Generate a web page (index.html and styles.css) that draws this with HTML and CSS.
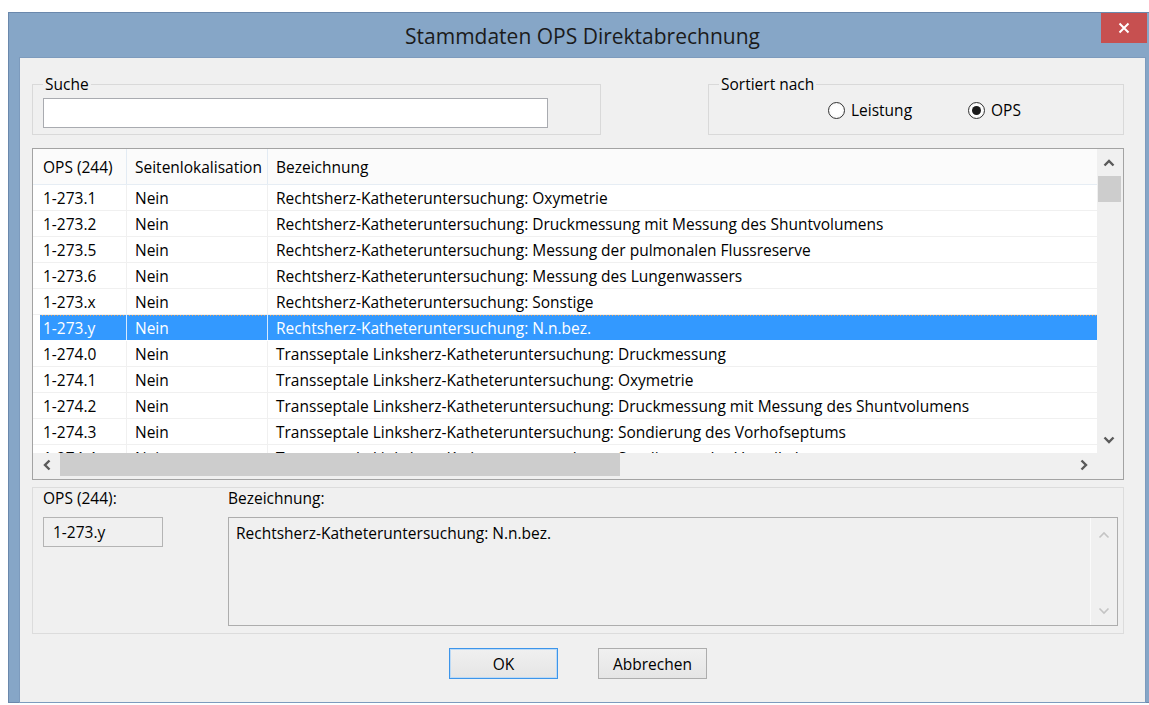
FILE: index.html
```html
<!DOCTYPE html>
<html lang="de">
<head>
<meta charset="utf-8">
<title>Stammdaten OPS Direktabrechnung</title>
<link rel="stylesheet" href="styles.css">
</head>
<body>
<div class="window">
  <div class="titlebar">
    <div class="title">Stammdaten OPS Direktabrechnung</div>
    <div class="close">
      <svg width="12" height="12" viewBox="0 0 12 12"><path d="M1.5 1.5 L10.5 10.5 M10.5 1.5 L1.5 10.5" stroke="#fff" stroke-width="2" fill="none"/></svg>
    </div>
  </div>

  <div class="client">
    <div class="toprow">
      <fieldset class="group search">
        <legend>Suche</legend>
        <input class="field" type="text">
      </fieldset>
      <fieldset class="group sort">
        <legend>Sortiert nach</legend>
        <div class="radios">
          <span class="radio"><span class="dot"></span>Leistung</span>
          <span class="radio on"><span class="dot"></span>OPS</span>
        </div>
      </fieldset>
    </div>

    <div class="list">
      <div class="viewport">
        <div class="row head">
          <div class="cell c1">OPS (244)</div>
          <div class="cell c2">Seitenlokalisation</div>
          <div class="cell c3">Bezeichnung</div>
        </div>
        <div class="row"><div class="cell c1">1-273.1</div><div class="cell c2">Nein</div><div class="cell c3">Rechtsherz-Katheteruntersuchung: Oxymetrie</div></div>
        <div class="row"><div class="cell c1">1-273.2</div><div class="cell c2">Nein</div><div class="cell c3">Rechtsherz-Katheteruntersuchung: Druckmessung mit Messung des Shuntvolumens</div></div>
        <div class="row"><div class="cell c1">1-273.5</div><div class="cell c2">Nein</div><div class="cell c3">Rechtsherz-Katheteruntersuchung: Messung der pulmonalen Flussreserve</div></div>
        <div class="row"><div class="cell c1">1-273.6</div><div class="cell c2">Nein</div><div class="cell c3">Rechtsherz-Katheteruntersuchung: Messung des Lungenwassers</div></div>
        <div class="row"><div class="cell c1">1-273.x</div><div class="cell c2">Nein</div><div class="cell c3">Rechtsherz-Katheteruntersuchung: Sonstige</div></div>
        <div class="row sel"><div class="cell c1">1-273.y</div><div class="cell c2">Nein</div><div class="cell c3">Rechtsherz-Katheteruntersuchung: N.n.bez.</div></div>
        <div class="row"><div class="cell c1">1-274.0</div><div class="cell c2">Nein</div><div class="cell c3">Transseptale Linksherz-Katheteruntersuchung: Druckmessung</div></div>
        <div class="row"><div class="cell c1">1-274.1</div><div class="cell c2">Nein</div><div class="cell c3">Transseptale Linksherz-Katheteruntersuchung: Oxymetrie</div></div>
        <div class="row"><div class="cell c1">1-274.2</div><div class="cell c2">Nein</div><div class="cell c3">Transseptale Linksherz-Katheteruntersuchung: Druckmessung mit Messung des Shuntvolumens</div></div>
        <div class="row"><div class="cell c1">1-274.3</div><div class="cell c2">Nein</div><div class="cell c3">Transseptale Linksherz-Katheteruntersuchung: Sondierung des Vorhofseptums</div></div>
        <div class="row"><div class="cell c1">1-274.4</div><div class="cell c2">Nein</div><div class="cell c3">Transseptale Linksherz-Katheteruntersuchung: Sondierung des Ventrikelseptums</div></div>
      </div>

      <div class="vscroll">
        <div class="sbtn"><svg width="12" height="8" viewBox="0 0 12 8"><path d="M1.5 6.5 L6 2 L10.5 6.5" stroke="#5a5a5a" stroke-width="2.4" fill="none"/></svg></div>
        <div class="vthumb"></div>
        <div class="vtrack"></div>
        <div class="sbtn"><svg width="12" height="8" viewBox="0 0 12 8"><path d="M1.5 1.5 L6 6 L10.5 1.5" stroke="#5a5a5a" stroke-width="2.4" fill="none"/></svg></div>
      </div>

      <div class="hscroll">
        <div class="sbtn"><svg width="8" height="12" viewBox="0 0 8 12"><path d="M6.5 1.5 L2 6 L6.5 10.5" stroke="#5a5a5a" stroke-width="2.4" fill="none"/></svg></div>
        <div class="hthumb"></div>
        <div class="htrack"></div>
        <div class="sbtn"><svg width="8" height="12" viewBox="0 0 8 12"><path d="M1.5 1.5 L6 6 L1.5 10.5" stroke="#5a5a5a" stroke-width="2.4" fill="none"/></svg></div>
      </div>
      <div class="corner"></div>
    </div>

    <div class="details">
      <div class="dcol left">
        <div class="dlabel">OPS (244):</div>
        <div class="readonly">1-273.y</div>
      </div>
      <div class="dcol right">
        <div class="dlabel">Bezeichnung:</div>
        <div class="memo">
          <div class="memo-text">Rechtsherz-Katheteruntersuchung: N.n.bez.</div>
          <div class="memo-scroll">
            <svg width="12" height="8" viewBox="0 0 12 8"><path d="M1.5 6.5 L6 2 L10.5 6.5" stroke="#c4c4c4" stroke-width="1.6" fill="none"/></svg>
            <svg width="12" height="8" viewBox="0 0 12 8"><path d="M1.5 1.5 L6 6 L10.5 1.5" stroke="#c4c4c4" stroke-width="1.6" fill="none"/></svg>
          </div>
        </div>
      </div>
    </div>

    <div class="buttons">
      <button class="btn default">OK</button>
      <button class="btn">Abbrechen</button>
    </div>
  </div>
</div>
</body>
</html>
```

FILE: styles.css
```css
html, body {
  margin: 0;
  height: 705px;
  overflow: hidden;
  background: #ffffff;
  font-family: "Open Sans", "Noto Sans", "DejaVu Sans", sans-serif;
  font-size: 15.5px;
  color: #000;
}

/* window frame */
.window {
  margin: 12px 0 0 8px;
  width: 1149px;
  box-sizing: border-box;
  border: 1px solid #6a88ac;
  background: #86a6c7;
}

.titlebar {
  height: 45px;
  display: grid;
  grid-template-columns: 1fr auto 1fr;
  align-items: center;
}

.title {
  grid-column: 2;
  font-size: 21px;
  color: #1b1b1b;
  padding-top: 1px;
}

.close {
  grid-column: 3;
  justify-self: end;
  align-self: start;
  margin-right: 9px;
  width: 46px;
  height: 30px;
  background: #c75050;
  display: flex;
  align-items: center;
  justify-content: center;
}

.client {
  margin: 0 11px;
  height: 644px;
  box-sizing: border-box;
  padding: 18px 21px 0 12px;
  background: #f0f0f0;
  box-shadow: 0 0 0 1px #7d9bbd;
  display: flex;
  flex-direction: column;
}

/* group boxes */
.toprow {
  display: flex;
  justify-content: space-between;
}

.group {
  margin: 0;
  min-width: 0;
  border: 1px solid #d9d9d9;
  padding: 6px 10px;
}

.group legend {
  padding: 0 2px;
  line-height: 16px;
}

.search { width: 569px; box-sizing: border-box; }
.sort { width: 416px; box-sizing: border-box; }

.field {
  display: block;
  box-sizing: border-box;
  width: 505px;
  height: 30px;
  margin: 0;
  border: 1px solid #a9abb0;
  background: #fff;
}

.radios {
  display: flex;
  box-sizing: border-box;
  height: 30px;
  align-items: flex-start;
  padding: 4px 0 0 109px;
}

.radio {
  display: flex;
  align-items: center;
  width: 140px;
  line-height: 17px;
}

.dot {
  width: 17px;
  height: 17px;
  box-sizing: border-box;
  border: 1px solid #333;
  border-radius: 50%;
  background: radial-gradient(circle, #ffffff 40%, #f1f1f1 100%);
  margin-right: 6px;
  display: flex;
  align-items: center;
  justify-content: center;
}

.radio.on .dot::after {
  content: "";
  width: 9px;
  height: 9px;
  border-radius: 50%;
  background: #1a1a1a;
}

/* list view */
.list {
  margin-top: 13px;
  height: 332px;
  box-sizing: border-box;
  border: 1px solid #a3a3a3;
  background: #fff;
  display: grid;
  grid-template-columns: 1fr 26px;
  grid-template-rows: 1fr 26px;
}

.viewport {
  overflow: hidden;
  grid-column: 1;
  grid-row: 1;
}

.row {
  display: grid;
  grid-template-columns: 94px 141px 1fr;
  height: 26px;
  box-sizing: border-box;
  border-bottom: 1px solid #f0f0f0;
}

.row.head {
  height: 36px;
  background: #fbfbfb;
  border-bottom: 1px solid #e6edf4;
}

.cell {
  border-right: 1px solid #f0f0f0;
  padding: 2px 0 0 8px;
  white-space: nowrap;
  overflow: hidden;
  line-height: 23px;
}

.head .cell {
  line-height: 33px;
  border-right-color: #e3ebf3;
}

.cell.c1 { padding-left: 10px; }
.cell.c3 { border-right: 0; }

.row.sel {
  color: #fff;
  background:
    repeating-linear-gradient(to right, #e9a25c 0 1px, transparent 1px 3px) top / 100% 1px no-repeat,
    #3399ff;
  border-bottom-color: #ffffff;
}

.row.sel .cell { border-right-color: #d6eaff; }
.row.sel .c1 { background: linear-gradient(to right, #fff 7px, transparent 7px); }

/* scroll bars */
.vscroll {
  grid-column: 2;
  grid-row: 1;
  background: #f0f0f0;
  display: flex;
  flex-direction: column;
}

.vscroll .sbtn {
  height: 27px;
  display: flex;
  align-items: center;
  justify-content: center;
  padding-right: 3px;
}

.vthumb {
  height: 26px;
  width: 23px;
  margin-left: 1px;
  background: #cdcdcd;
}

.vtrack { flex: 1; }

.hscroll {
  grid-column: 1;
  grid-row: 2;
  background: #f0f0f0;
  display: flex;
}

.hscroll .sbtn {
  width: 27px;
  display: flex;
  align-items: center;
  justify-content: center;
  padding-bottom: 3px;
}

.hthumb {
  width: 560px;
  height: 23px;
  background: #cdcdcd;
}

.htrack { flex: 1; }

.corner {
  grid-column: 2;
  grid-row: 2;
  background: #f0f0f0;
}

/* details panel */
.details {
  margin-top: 7px;
  border: 1px solid #dcdcdc;
  padding: 0 5px 7px 10px;
  display: flex;
  gap: 65px;
}

.dcol.left { width: 120px; }
.dcol.right { flex: 1; }

.dlabel {
  line-height: 20px;
  margin-bottom: 9px;
}

.readonly {
  height: 30px;
  box-sizing: border-box;
  border: 1px solid #b4b4b4;
  padding-left: 9px;
  line-height: 28px;
}

.memo {
  height: 109px;
  box-sizing: border-box;
  border: 1px solid #adadad;
  display: flex;
}

.memo-text {
  flex: 1;
  padding: 5px 7px 4px;
  line-height: 20px;
}

.memo-scroll {
  width: 26px;
  border-left: 1px solid #fafafa;
  display: flex;
  flex-direction: column;
  justify-content: space-between;
  align-items: center;
  padding: 13px 0 10px;
}

/* dialog buttons */
.buttons {
  margin-top: 14px;
  display: flex;
  justify-content: center;
  gap: 40px;
}

.btn {
  width: 109px;
  height: 31px;
  margin: 0;
  padding: 0;
  font: inherit;
  color: #000;
  border: 1px solid #adadad;
  background: linear-gradient(#f0f0f0, #e5e5e5);
}

.btn.default {
  border-color: #3d95ea;
  box-shadow: inset 0 0 0 1px #bcdaf6;
}
```
